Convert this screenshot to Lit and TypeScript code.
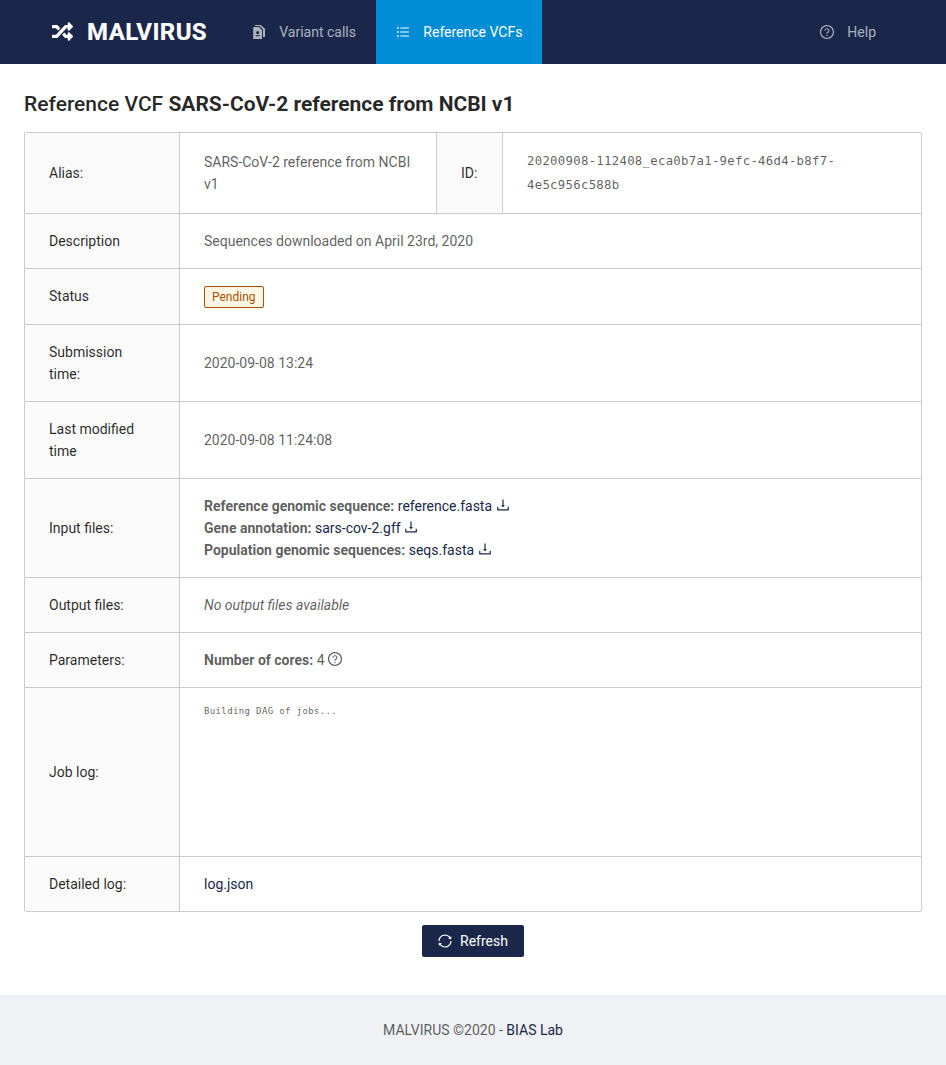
import { LitElement, html, css, svg } from "lit";
import { customElement } from "lit/decorators.js";

const help = svg`<path d="M512 64C264.6 64 64 264.6 64 512s200.600 448 448 448 448-200.600 448-448S759.400 64 512 64zm0 820c-205.400 0-372-166.600-372-372s166.600-372 372-372 372 166.600 372 372-166.600 372-372 372z"/><path d="M623.600 316.700C593.600 290.400 554 276 512 276s-81.600 14.500-111.600 40.700C369.200 344 352 380.700 352 420v7.600c0 4.400 3.600 8 8 8h48c4.400 0 8-3.600 8-8V420c0-44.100 43.100-80 96-80s96 35.900 96 80c0 31.100-22 59.600-56.100 72.700-21.200 8.100-39.200 22.300-52.100 40.900-13.100 19-19.900 41.800-19.900 64.900V620c0 4.400 3.600 8 8 8h48c4.400 0 8-3.600 8-8v-22.700a48.300 48.300 0 0 1 30.900-44.800c59-22.700 97.100-74.700 97.100-132.500.1-39.300-17.100-76-48.300-103.300zM472 732a40 40 0 1 0 80 0 40 40 0 1 0-80 0z"/>`;
const download = svg`<path d="M505.700 661a8 8 0 0 0 12.600 0l112-141.700c4.100-5.200.4-12.900-6.300-12.900h-74.100V168c0-4.400-3.600-8-8-8h-60c-4.400 0-8 3.600-8 8v338.300H400c-6.700 0-10.400 7.700-6.300 12.900l112 141.800zM878 626h-60c-4.400 0-8 3.600-8 8v154H214V634c0-4.400-3.600-8-8-8h-60c-4.400 0-8 3.600-8 8v198c0 17.700 14.300 32 32 32h684c17.700 0 32-14.300 32-32V634c0-4.400-3.600-8-8-8z"/>`;
const sync = svg`<path d="M168 504.200c1-43.700 10-86.100 26.900-126 17.300-41 42.100-77.700 73.700-109.400S337 212.300 378 195c42.400-17.900 87.400-27 133.900-27s91.500 9.100 133.800 27A341.500 341.500 0 0 1 755 268.800c9.900 9.900 19.200 20.400 27.800 31.400l-60.200 47a8 8 0 0 0 3 14.100l175.700 43c5 1.200 9.900-2.600 9.900-7.700l.8-180.900c0-6.700-7.700-10.500-12.900-6.300l-56.400 44.100C765.800 155.100 646.200 92 511.800 92 282.700 92 96.300 275.600 92 503.800a8 8 0 0 0 8 8.200h60c4.400 0 7.900-3.500 8-7.800zm756 7.800h-60c-4.400 0-7.900 3.500-8 7.800-1 43.700-10 86.100-26.900 126-17.300 41-42.100 77.800-73.700 109.400A342.450 342.450 0 0 1 512.100 856a342.240 342.240 0 0 1-243.200-100.800c-9.900-9.900-19.200-20.400-27.800-31.400l60.200-47a8 8 0 0 0-3-14.100l-175.700-43c-5-1.200-9.900 2.600-9.900 7.700l-.7 181c0 6.700 7.700 10.500 12.900 6.300l56.400-44.100C258.200 868.900 377.800 932 512.200 932c229.200 0 415.500-183.700 419.800-411.800a8 8 0 0 0-8-8.200z"/>`;

const icon = (shape: unknown) => html`<svg class="icon" viewBox="64 64 896 896" aria-hidden="true">${shape}</svg>`;

const shuffle = html`<svg class="logo" viewBox="0 0 512 512" aria-hidden="true"><path d="M504.971 359.029c9.373 9.373 9.373 24.569 0 33.941l-80 79.984c-15.010 15.010-40.971 4.490-40.971-16.971V416h-58.785a12.004 12.004 0 0 1-8.773-3.812l-70.556-75.596 53.333-57.143L352 336h32v-39.981c0-21.438 25.943-31.998 40.971-16.971l80 79.981zM12 176h84l52.781 56.551 53.333-57.143-70.556-75.596A11.999 11.999 0 0 0 122.785 96H12c-6.627 0-12 5.373-12 12v56c0 6.627 5.373 12 12 12zm372 0v39.984c0 21.460 25.961 31.980 40.971 16.971l80-79.984c9.373-9.373 9.373-24.569 0-33.941l-80-79.981C409.943 24.021 384 34.582 384 56.019V96h-58.785a12.004 12.004 0 0 0-8.773 3.812L96 336H12c-6.627 0-12 5.373-12 12v56c0 6.627 5.373 12 12 12h110.785c3.326 0 6.503-1.381 8.773-3.812L352 176h32z"/></svg>`;

const list = html`<svg class="icon" viewBox="0 0 14 14" aria-hidden="true"><path d="M1 2.200h1.700v1.600H1zM1 6.200h1.700v1.600H1zM1 10.200h1.700v1.600H1zM4.300 2.400h8.700v1.200H4.300zM4.300 6.400h8.700v1.200H4.300zM4.300 10.400h8.700v1.200H4.300z"/></svg>`;

const documents = html`<svg class="icon" viewBox="0 0 14 14" aria-hidden="true"><path fill-rule="evenodd" d="M1.200 2H7l3 3v9H1.200zM5.700 6a1.600 1.600 0 1 0 0 3.200 1.600 1.600 0 1 0 0-3.200zM3.600 10.200v1.100h4.300v-1.100z"/><path d="M3 0h5.700L13 3.800V12h-2V4.500L7.800 1H3z"/></svg>`;

@customElement("app-root")
export class AppRoot extends LitElement {
  static styles = css`
    :host { display: block; min-height: 1065px; background: #fff; color: rgba(0, 0, 0, 0.65); font: 14px/22px Roboto, sans-serif; }
    * { box-sizing: border-box; }
    header { display: flex; height: 64px; padding: 0 50px; background: #1a274a; color: rgba(255, 255, 255, 0.65); line-height: 64px; }
    .brand { display: flex; align-items: center; flex: none; width: 183px; padding-left: 2px; color: #fff; font-size: 24px; font-weight: 700; letter-spacing: 0.420px; -webkit-text-stroke: 0.200px #fff; }
    .logo { width: 21px; height: 21px; margin: -2px 14px 0 0; fill: currentColor; }
    .icon { width: 14px; height: 14px; fill: currentColor; vertical-align: -1px; }
    .item { display: flex; align-items: center; padding: 0 20px; }
    .item .icon { margin-right: 13.400px; }
    .variant { padding-left: 18.800px; }
    .active { background: #008dd6; color: #fff; }
    .help { margin-left: auto; }
    main { height: 931px; padding: 24px 24px 0; }
    h1 { margin: 0 0 12px; color: rgba(0, 0, 0, 0.85); font-size: 21px; font-weight: 500; line-height: 32px; }
    b { font-weight: 700; }
    h1 b { letter-spacing: -0.030px; }
    table { width: 898px; table-layout: fixed; border-collapse: separate; border-spacing: 0; border: 1px solid #cbcbcb; border-radius: 2px; }
    th, td { padding: 16px 24px; border-right: 1px solid #cbcbcb; border-bottom: 1px solid #cbcbcb; text-align: left; vertical-align: middle; font-weight: 400; }
    th { background: #fafafa; color: rgba(0, 0, 0, 0.85); }
    tr > :last-child { border-right: 0; }
    tr:last-child > * { border-bottom: 0; }
    .c1 { width: 155px; } .c2 { width: 257px; } .c3 { width: 66px; }
    .mono { font: 12.300px/24px "DejaVu Sans Mono", monospace; letter-spacing: 0.300px; }
    .tag { display: inline-block; height: 22px; padding: 0 7px; border: 1px solid #ad4e00; border-radius: 2px; background: #fff7e6; color: #ad4e00; font-size: 12px; line-height: 20px; vertical-align: top; }
    .status th { padding: 16px 24px 17px; }
    .status td { padding: 17px 24px 16px; }
    a { color: #1a274a; text-decoration: none; }
    pre { height: 136px; margin: 0; font: 9px/15px "DejaVu Sans Mono", monospace; letter-spacing: 0.370px; }
    .actions { display: flex; justify-content: center; margin-top: 13px; }
    button { display: flex; align-items: center; gap: 8px; height: 32px; padding: 0 16px; border: 0; border-radius: 2px; background: #1a274a; color: #fff; font: 14px Roboto, sans-serif; }
    footer { height: 70px; padding: 24px; background: #eff1f5; text-align: center; }
  `;

  private file(label: string, name: string) {
    return html`<div><b>${label}:</b> <a href="#">${name} ${icon(download)}</a></div>`;
  }

  render() {
    return html`
      <header>
        <div class="brand">${shuffle}<span>MALVIRUS</span></div>
        <div class="item variant">${documents}<span>Variant calls</span></div>
        <div class="item active">${list}<span>Reference VCFs</span></div>
        <div class="item help">${icon(help)}<span>Help</span></div>
      </header>
      <main>
        <h1>Reference VCF <b>SARS-CoV-2 reference from NCBI v1</b></h1>
        <table>
          <colgroup><col class="c1"><col class="c2"><col class="c3"><col></colgroup>
          <tbody>
            <tr><th>Alias:</th><td>SARS-CoV-2 reference from NCBI v1</td><th>ID:</th><td class="mono">20200908-112408_eca0b7a1-9efc-46d4-b8f7-4e5c956c588b</td></tr>
            <tr><th>Description</th><td colspan="3">Sequences downloaded on April 23rd, 2020</td></tr>
            <tr class="status"><th>Status</th><td colspan="3"><span class="tag">Pending</span></td></tr>
            <tr><th>Submission time:</th><td colspan="3">2020-09-08 13:24</td></tr>
            <tr><th>Last modified time</th><td colspan="3">2020-09-08 11:24:08</td></tr>
            <tr><th>Input files:</th><td colspan="3">
              ${this.file("Reference genomic sequence", "reference.fasta")}
              ${this.file("Gene annotation", "sars-cov-2.gff")}
              ${this.file("Population genomic sequences", "seqs.fasta")}
            </td></tr>
            <tr><th>Output files:</th><td colspan="3"><i>No output files available</i></td></tr>
            <tr><th>Parameters:</th><td colspan="3"><b>Number of cores:</b> 4 ${icon(help)}</td></tr>
            <tr><th>Job log:</th><td colspan="3"><pre>Building DAG of jobs...</pre></td></tr>
            <tr><th>Detailed log:</th><td colspan="3"><a href="#">log.json</a></td></tr>
          </tbody>
        </table>
        <div class="actions"><button>${icon(sync)}<span>Refresh</span></button></div>
      </main>
      <footer>MALVIRUS ©2020 - <a href="#">BIAS Lab</a></footer>
    `;
  }
}
